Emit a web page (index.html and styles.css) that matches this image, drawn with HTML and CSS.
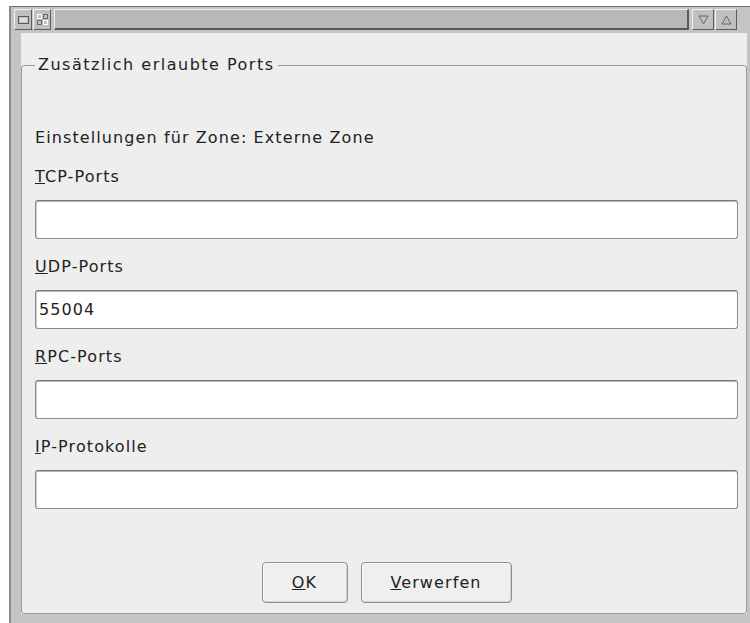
FILE: index.html
```html
<!DOCTYPE html>
<html lang="de">
<head>
<meta charset="utf-8">
<title>Zusätzlich erlaubte Ports</title>
<link rel="stylesheet" href="styles.css">
</head>
<body>
<div class="window">
  <div class="titlebar">
    <span class="tbtn">
      <svg width="13" height="13" viewBox="0 0 13 13"><rect x="1.5" y="3.5" width="10" height="7" fill="none" stroke="#5a5a5a"/><line x1="3" y1="6" x2="10" y2="6" stroke="#ffffff"/><line x1="3" y1="8" x2="10" y2="8" stroke="#ffffff"/></svg>
    </span>
    <span class="tbtn">
      <svg width="13" height="13" viewBox="0 0 13 13"><rect x="1.5" y="1.5" width="4" height="4" fill="none" stroke="#ffffff"/><rect x="7.5" y="1.5" width="4" height="4" fill="none" stroke="#6a6a6a"/><rect x="1.5" y="7.5" width="4" height="4" fill="none" stroke="#6a6a6a"/><rect x="7.5" y="7.5" width="4" height="4" fill="none" stroke="#ffffff"/></svg>
    </span>
    <div class="title"></div>
    <span class="tbtn wide">
      <svg width="13" height="13" viewBox="0 0 13 13"><polygon points="2,3 11,3 6.5,11" fill="none" stroke="#666"/></svg>
    </span>
    <span class="tbtn wide">
      <svg width="13" height="13" viewBox="0 0 13 13"><polygon points="2,11 11,11 6.5,3" fill="none" stroke="#666"/></svg>
    </span>
  </div>
  <div class="client">
    <fieldset class="group">
      <legend>Zusätzlich erlaubte Ports</legend>
      <div class="form">
        <p class="zone">Einstellungen für Zone: Externe Zone</p>
        <label class="lbl"><u>T</u>CP-Ports</label>
        <div class="field"></div>
        <label class="lbl"><u>U</u>DP-Ports</label>
        <div class="field">55004</div>
        <label class="lbl"><u>R</u>PC-Ports</label>
        <div class="field"></div>
        <label class="lbl"><u>I</u>P-Protokolle</label>
        <div class="field"></div>
        <div class="buttons">
          <button class="btn ok"><u>O</u>K</button>
          <button class="btn discard"><u>V</u>erwerfen</button>
        </div>
      </div>
    </fieldset>
  </div>
</div>
</body>
</html>
```

FILE: styles.css
```css
html, body {
  margin: 0;
  overflow: hidden;
  background: #ffffff;
}

body {
  font-family: "DejaVu Sans", "Bitstream Vera Sans", sans-serif;
  font-size: 16px;
  letter-spacing: 1.1px;
  color: #222222;
}

/* window frame */
.window {
  box-sizing: border-box;
  width: 743px;
  height: 617px;
  margin: 6px 0 0 9px;
  display: flex;
  flex-direction: column;
  background: #c4c4c4;
  border-top: 1px solid #6f6f6f;
  border-left: 2px solid #8a8a8a;
}

.titlebar {
  display: flex;
  height: 21px;
  margin: 2px 15px 0 3px;
  gap: 1px;
}

.tbtn {
  box-sizing: border-box;
  width: 18px;
  height: 21px;
  display: flex;
  align-items: center;
  justify-content: center;
  background: #c0c0c0;
  border-top: 1px solid #f4f4f4;
  border-left: 1px solid #f4f4f4;
  border-right: 1px solid #5c5c5c;
  border-bottom: 1px solid #5c5c5c;
}

.tbtn.wide {
  width: 22px;
}

.title {
  flex: 1;
  margin: 0 2px;
  background: #b8b8b8;
  border-top: 1px solid #f0f0f0;
  border-left: 1px solid #f0f0f0;
  border-right: 2px solid #5a5a5a;
  border-bottom: 2px solid #5a5a5a;
}

/* dialog area */
.client {
  flex: 1;
  display: flex;
  flex-direction: column;
  margin: 3px 5px 9px 10px;
  padding-top: 23px;
  background: #eeeeee;
}

.group {
  flex: 1;
  min-width: 0;
  margin: 0;
  padding: 0 8px 0 13px;
  border: 1px solid #9a9a9a;
  border-radius: 3px;
}

.group legend {
  padding: 0 3px;
  line-height: 18px;
  letter-spacing: 1.5px;
}

.form {
  display: flex;
  flex-direction: column;
  padding-top: 54px;
}

.zone {
  margin: 0 0 19px;
  line-height: 20px;
}

.lbl {
  display: block;
  line-height: 20px;
  margin-bottom: 13px;
}

.field {
  box-sizing: border-box;
  height: 39px;
  margin-bottom: 18px;
  padding: 0 3px;
  line-height: 37px;
  background: #ffffff;
  border: 1px solid #8c8c8c;
  border-top-color: #7a7a7a;
  border-radius: 3px;
  box-shadow: inset 0 1px 0 #b4b4b4, inset 1px 0 0 #d0d0d0;
}

.buttons {
  display: flex;
  justify-content: center;
  gap: 13px;
  margin-top: 35px;
}

.btn {
  box-sizing: border-box;
  height: 41px;
  font: inherit;
  letter-spacing: inherit;
  color: #222222;
  background: #efefef;
  border: 1px solid #8e8e8e;
  border-radius: 4px;
  box-shadow: inset 1px 1px 0 #fbfbfb, inset -1px -1px 0 #d6d6d6;
  padding: 0;
}

.btn.ok {
  width: 86px;
}

.btn.discard {
  width: 151px;
}
```
